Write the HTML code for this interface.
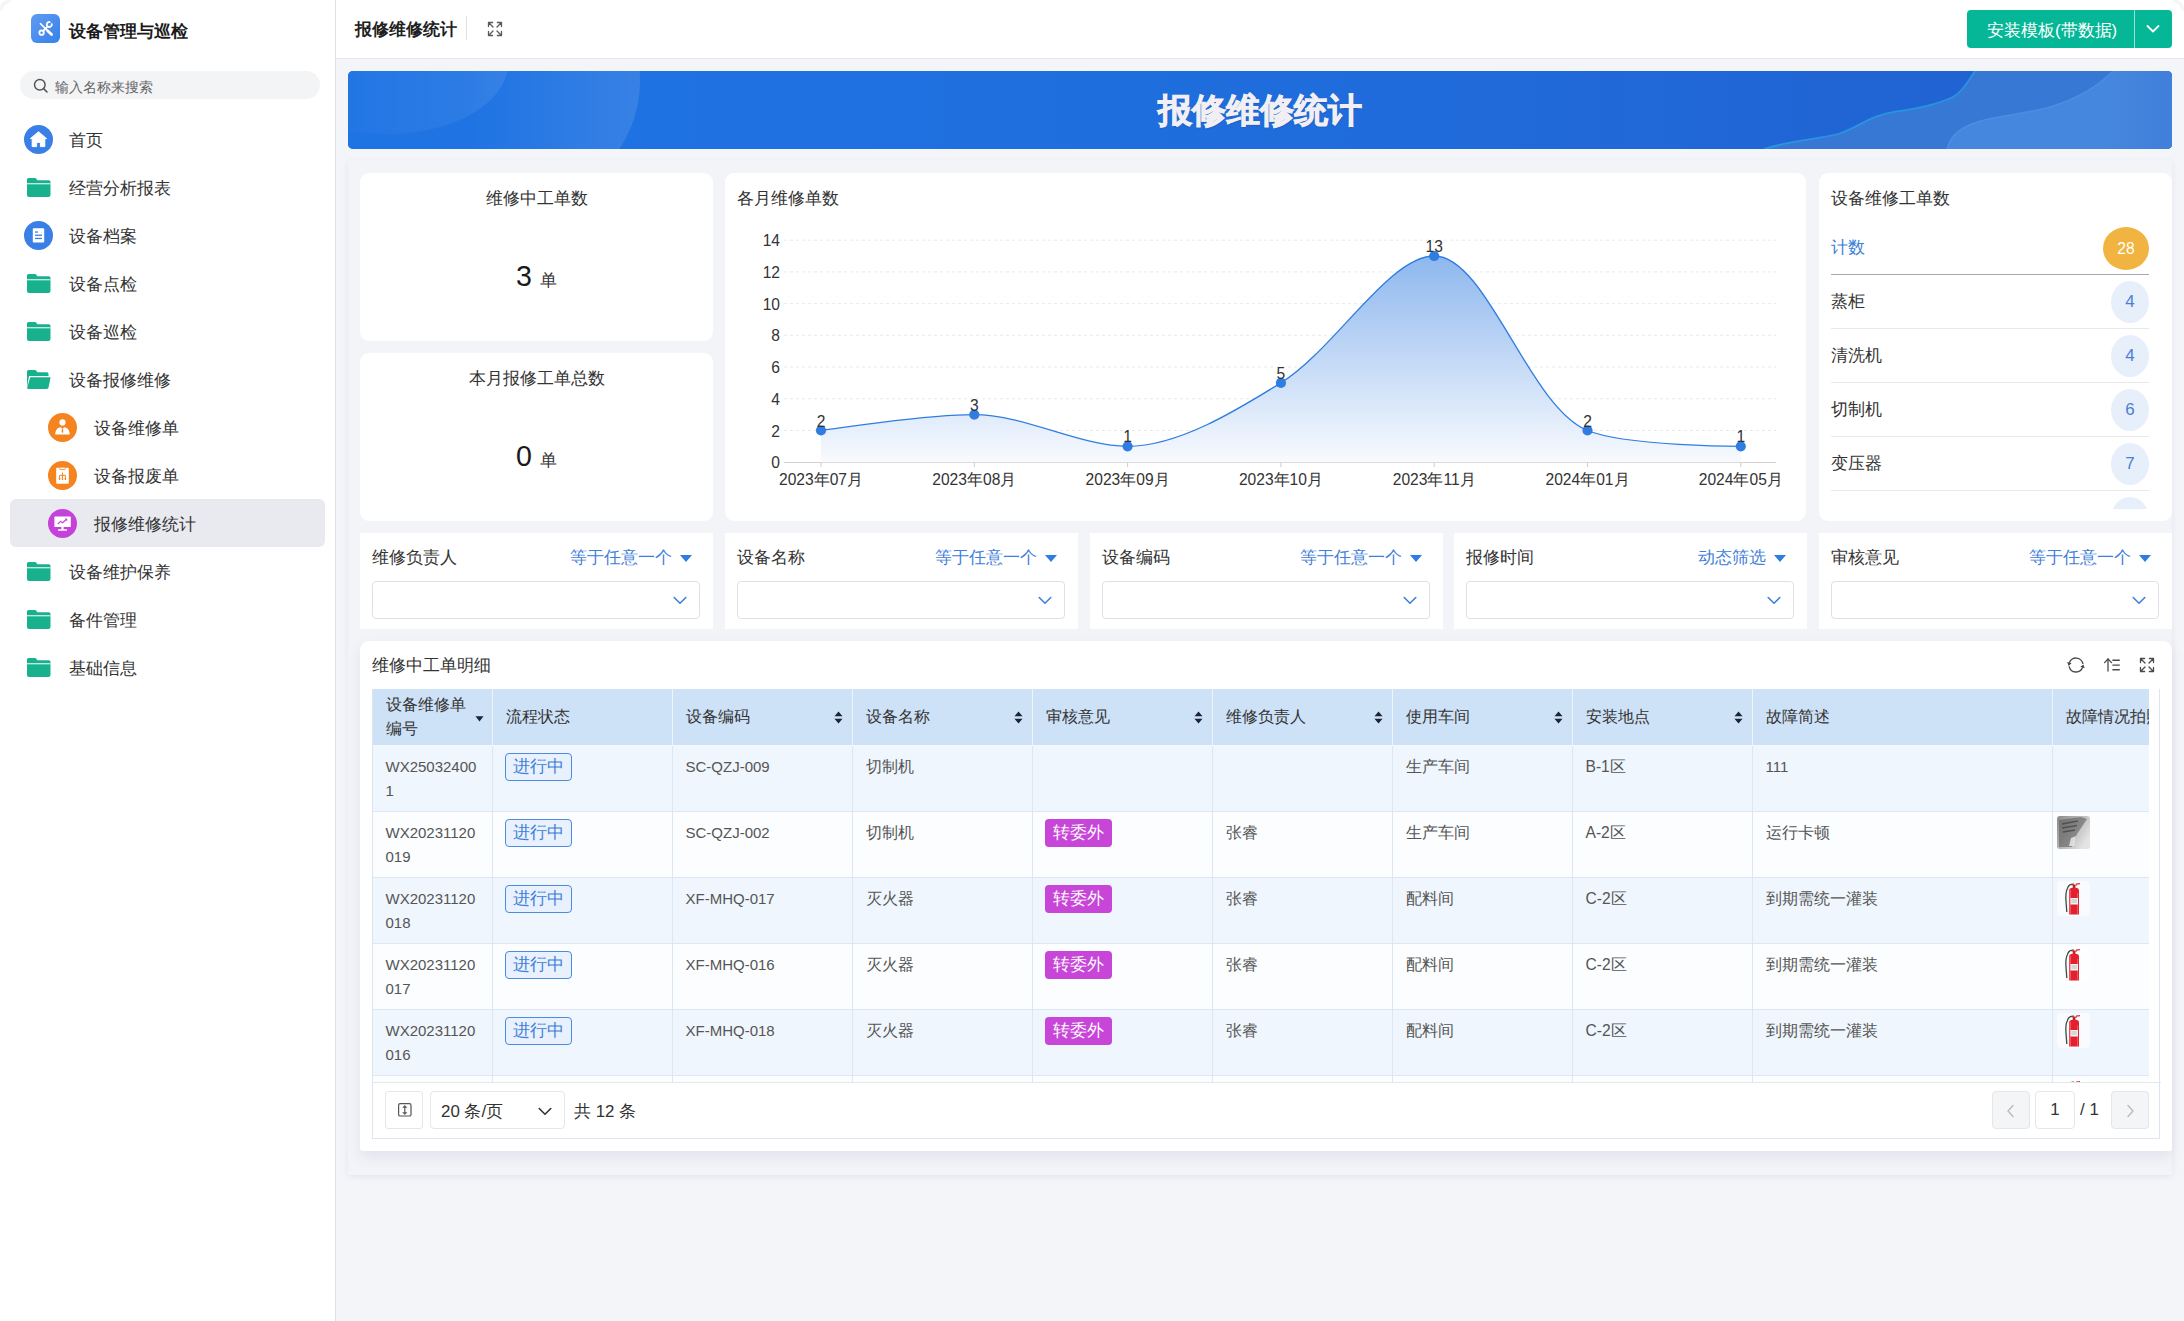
<!DOCTYPE html>
<html><head><meta charset="utf-8">
<style>
*{box-sizing:border-box;margin:0;padding:0}
html,body{width:2184px;height:1321px;overflow:hidden}
body{font-family:"Liberation Sans",sans-serif;background:#f4f5f9;color:#333;position:relative}
.abs{position:absolute}
#side{position:absolute;left:0;top:0;width:336px;height:1321px;background:#fff;border-right:1px solid #dedfe2}
.logo{position:absolute;left:31px;top:14px;width:29px;height:29px;border-radius:6px;background:linear-gradient(135deg,#609cf0,#3581ec)}
.apptitle{position:absolute;left:69px;top:17.5px;line-height:28px;font-size:16.9px;font-weight:bold;color:#1a1a1a;white-space:nowrap}
.search{position:absolute;left:20px;top:71px;width:300px;height:28px;border-radius:14px;background:#f3f4f6}
.search span{position:absolute;left:35px;top:2px;line-height:28px;font-size:14.3px;color:#666;white-space:nowrap}
.mi{position:absolute;left:0;width:335px;height:48px}
.mi .ic{position:absolute}
.mi .tx{position:absolute;left:69px;top:2px;line-height:48px;font-size:16.9px;color:#333;white-space:nowrap}
.mi.sub .tx{left:94px}
.mi.sel{left:10px;width:315px;background:#e9eaef;border-radius:6px}
.mi.sel .tx{left:84px}
#hdr{position:absolute;left:336px;top:0;width:1848px;height:59px;background:#fff;border-bottom:1px solid #e6e7ec}
.htitle{position:absolute;left:19px;top:16px;line-height:28px;font-size:16.9px;font-weight:bold;color:#1f1f1f;white-space:nowrap}
.hsep{position:absolute;left:130px;top:16px;width:1px;height:24px;background:#e0e0e0}
.gbtn{position:absolute;left:1631px;top:10px;width:205px;height:38px;border-radius:4px;background:#06b797;color:#fff}
.gbtn span{position:absolute;left:20px;top:1.5px;line-height:38px;font-size:16.9px;white-space:nowrap}
.gbtn i{position:absolute;left:167px;top:0;width:1px;height:38px;background:rgba(255,255,255,.6)}
#banner{position:absolute;left:348px;top:71px;width:1824px;height:78px;border-radius:5px;overflow:hidden;background:linear-gradient(90deg,#1f72e2 0%,#2068db 60%,#2462d2 100%)}
.btitle{position:absolute;left:0;top:0;width:100%;text-align:center;line-height:78px;font-size:34px;font-weight:900;color:#f1eff3;-webkit-text-stroke:0.8px #f1eff3;text-shadow:0 1px 2px rgba(0,0,0,.2)}
#wrap{position:absolute;left:348px;top:160px;width:1824px;height:1015px;background:#f3f4f8;box-shadow:0 2px 6px rgba(120,120,160,.12)}
.card{position:absolute;background:#fff;border-radius:9px}
.ctitle{position:absolute;line-height:24px;font-size:16.9px;color:#333;white-space:nowrap}

.kt{position:absolute;left:0;width:100%;text-align:center;line-height:24px;font-size:16.9px;color:#333;white-space:nowrap}
.knum{position:absolute;left:0;width:100%;text-align:center;white-space:nowrap;line-height:40px}
.knum b{font-weight:normal;font-size:28.6px;color:#1a1a1a}
.knum i{font-style:normal;font-size:16.9px;color:#333;margin-left:8px}
.lrow{position:absolute;left:12px;width:318px;height:54px;border-bottom:1px solid #e9e9ec}
.lrow span{position:absolute;left:0;top:15px;line-height:24px;font-size:16.9px;color:#333}
.lrow em{position:absolute;right:0;top:6px;width:38px;height:42px;border-radius:50%;background:#e7effb;color:#4a80d4;font-style:normal;font-size:16.9px;line-height:42px;text-align:center}
.ax{font-family:"Liberation Sans",sans-serif;font-size:15.6px;fill:#333}

.fcard{position:absolute;top:533px;width:353px;height:96px;background:#fff}
.fl{position:absolute;left:12px;top:13px;line-height:24px;font-size:16.9px;color:#333;white-space:nowrap}
.fm{position:absolute;right:41px;top:13px;line-height:24px;font-size:16.9px;color:#3f80d8;white-space:nowrap}
.ftri{position:absolute;right:21px;top:22px;width:0;height:0;border-left:6px solid transparent;border-right:6px solid transparent;border-top:7px solid #2f7de1}
.fsel{position:absolute;left:12px;top:48px;width:328px;height:38px;border:1px solid #dfe1e6;border-radius:4px;background:#fff}
.fsel svg{position:absolute;right:12px;top:14px}

#tcard{position:absolute;left:360px;top:641px;width:1812px;height:510px;background:#fff;border-radius:9px 9px 3px 3px;box-shadow:0 6px 14px rgba(90,90,140,.10)}
.ttl{position:absolute;left:12px;top:13px;line-height:24px;font-size:16.9px;color:#333;white-space:nowrap}
#tbox{position:absolute;left:12px;top:48px;width:1788px;height:450px;border:1px solid #dde6f0;border-top:none}
#tview{position:absolute;left:0;top:0;width:1776px;height:393px;overflow:hidden;background:#f3f7fc}
.th{position:absolute;top:0;height:56px;background:#cde1f7;border-right:1px solid #eef4fb}
.th span{position:absolute;left:12.5px;top:16px;line-height:24px;font-size:15.6px;color:#333;white-space:nowrap}
.th .srt{position:absolute;top:22px;right:9px}
.td{position:absolute;height:66px;border-right:1px solid #dce7f3;border-bottom:1px solid #dce7f3}
.td span{position:absolute;left:12.5px;top:9px;line-height:23.7px;font-size:15.6px;color:#555;white-space:nowrap}
.tg1{position:absolute;left:11.5px;top:7px;width:67px;height:28px;border:1px solid #4b8be0;border-radius:4px;background:#e8f1fd;color:#3f80d8;font-size:16.9px;line-height:26px;text-align:center}
.tg2{position:absolute;left:11.5px;top:7px;width:67px;height:28px;border-radius:4px;background:#c746d8;color:#fff;font-size:16.9px;line-height:28px;text-align:center}
#tfoot{position:absolute;left:0;top:393px;width:1788px;height:56px;border-top:1px solid #e3e8ef}
.pb{position:absolute;top:8px;height:38px;border:1px solid #e4e6ea;border-radius:4px;background:#fff}
.ptx{position:absolute;line-height:24px;font-size:16.9px;color:#333;white-space:nowrap}
.td span.lat{font-size:15px}
</style></head><body>
<div id="side">
  <div class="logo"><svg width="29" height="29" viewBox="0 0 29 29" fill="none" stroke="#fff" stroke-linecap="round"><path d="M9.4 9.6 L15.8 15.9" stroke-width="1.5"/><path d="M16.6 16.7 L20.6 20.6" stroke-width="2.8"/><path d="M12.2 17 L16.8 12.4" stroke-width="1.8"/><circle cx="10.6" cy="18.7" r="2.2" stroke-width="1.8"/><path d="M18.73 8.04 A2.5 2.5 0 1 0 20.76 10.07" stroke-width="1.8"/></svg></div>
  <div class="apptitle">设备管理与巡检</div>
  <div class="search"><svg style="position:absolute;left:13px;top:7px" width="16" height="16" viewBox="0 0 16 16"><circle cx="6.8" cy="6.8" r="5.3" fill="none" stroke="#555" stroke-width="1.5"/><path d="M10.6 10.6 L14 14" stroke="#555" stroke-width="1.6" stroke-linecap="round"/></svg><span>输入名称来搜索</span></div>
  <div class="mi" style="top:115px"><svg class="ic" style="left:24px;top:10px" width="29" height="29" viewBox="0 0 29 29"><circle cx="14.5" cy="14.5" r="14.5" fill="#3a7fe6"/><path d="M14.5 6.8 L22.6 13.6 L20.8 13.6 L20.8 21.6 L16.4 21.6 L16.4 17.4 L12.6 17.4 L12.6 21.6 L8.2 21.6 L8.2 13.6 L6.4 13.6 Z" fill="#fff" stroke="#fff" stroke-width="1" stroke-linejoin="round"/></svg><div class="tx">首页</div></div>
  <div class="mi" style="top:163px"><svg class="ic" style="left:27px;top:15px" width="24" height="19" viewBox="0 0 24 19"><path d="M1.5 0 H8.5 L10.5 2.2 H22 A1.8 1.8 0 0 1 23.5 4 V17 A2 2 0 0 1 21.5 19 H2 A2 2 0 0 1 0 17 V1.5 A1.5 1.5 0 0 1 1.5 0 Z" fill="#17b18e"/><rect x="0" y="5.2" width="23.5" height="1.1" fill="#e6f7f2"/></svg><div class="tx">经营分析报表</div></div>
  <div class="mi" style="top:211px"><svg class="ic" style="left:24px;top:10px" width="29" height="29" viewBox="0 0 29 29"><circle cx="14.5" cy="14.5" r="14.5" fill="#3a7fe6"/><rect x="8.8" y="7.2" width="11.4" height="14.4" rx="0.8" fill="#fff"/><rect x="11" y="10.4" width="3" height="1.3" fill="#3a7fe6"/><rect x="11" y="13.6" width="7" height="1.3" fill="#3a7fe6"/><rect x="11" y="16.8" width="7" height="1.3" fill="#3a7fe6"/></svg><div class="tx">设备档案</div></div>
  <div class="mi" style="top:259px"><svg class="ic" style="left:27px;top:15px" width="24" height="19" viewBox="0 0 24 19"><path d="M1.5 0 H8.5 L10.5 2.2 H22 A1.8 1.8 0 0 1 23.5 4 V17 A2 2 0 0 1 21.5 19 H2 A2 2 0 0 1 0 17 V1.5 A1.5 1.5 0 0 1 1.5 0 Z" fill="#17b18e"/><rect x="0" y="5.2" width="23.5" height="1.1" fill="#e6f7f2"/></svg><div class="tx">设备点检</div></div>
  <div class="mi" style="top:307px"><svg class="ic" style="left:27px;top:15px" width="24" height="19" viewBox="0 0 24 19"><path d="M1.5 0 H8.5 L10.5 2.2 H22 A1.8 1.8 0 0 1 23.5 4 V17 A2 2 0 0 1 21.5 19 H2 A2 2 0 0 1 0 17 V1.5 A1.5 1.5 0 0 1 1.5 0 Z" fill="#17b18e"/><rect x="0" y="5.2" width="23.5" height="1.1" fill="#e6f7f2"/></svg><div class="tx">设备巡检</div></div>
  <div class="mi" style="top:355px"><svg class="ic" style="left:27px;top:15px" width="24" height="19" viewBox="0 0 24 19"><path d="M1.5 0 H8.5 L10.5 2.2 H20 A1.8 1.8 0 0 1 21.5 4 V6 H2 L0 17 V1.5 A1.5 1.5 0 0 1 1.5 0 Z" fill="#17b18e"/><path d="M3.2 7.2 H23.6 L21.6 17.2 A2 2 0 0 1 19.6 19 H1.4 A1.2 1.2 0 0 1 0.2 17.6 Z" fill="#17b18e"/></svg><div class="tx">设备报修维修</div></div>
  <div class="mi sub" style="top:403px"><svg class="ic" style="left:48px;top:10px" width="29" height="29" viewBox="0 0 29 29"><circle cx="14.5" cy="14.5" r="14.5" fill="#f5841f"/><circle cx="14.5" cy="9.4" r="3.1" fill="#fff"/><path d="M7.2 21.6 C7.4 17 9.6 14.6 12.4 14.2 L14.5 15.4 L16.6 14.2 C19.4 14.6 21.6 17 21.8 21.6 Z" fill="#fff"/><path d="M14 15.4 H15 L15.3 19 L14.5 20 L13.7 19 Z" fill="#f5841f"/></svg><div class="tx">设备维修单</div></div>
  <div class="mi sub" style="top:451px"><svg class="ic" style="left:48px;top:10px" width="29" height="29" viewBox="0 0 29 29"><circle cx="14.5" cy="14.5" r="14.5" fill="#f5841f"/><rect x="8.2" y="6.8" width="12.6" height="16" rx="0.8" fill="#fff"/><rect x="11.8" y="6.2" width="5.4" height="2.4" rx="0.6" fill="#fff" stroke="#f5841f" stroke-width="0.8"/><path d="M14.5 11.5 V14.3 M11.6 17.6 V14.3 H17.4 V17.6 M14.5 14.3 V17.6" stroke="#f5841f" stroke-width="1" fill="none"/><circle cx="11.6" cy="18" r="0.9" fill="#f5841f"/><circle cx="14.5" cy="18" r="0.9" fill="#f5841f"/><circle cx="17.4" cy="18" r="0.9" fill="#f5841f"/></svg><div class="tx">设备报废单</div></div>
  <div class="mi sub sel" style="top:499px"><svg class="ic" style="left:38px;top:10px" width="29" height="29" viewBox="0 0 29 29"><circle cx="14.5" cy="14.5" r="14.5" fill="#c442d9"/><rect x="6.4" y="7.5" width="16.4" height="10.5" rx="0.6" fill="#fff"/><path d="M9.8 15 L12.6 12.4 L14.6 13.8 L18.6 10.2" stroke="#c442d9" stroke-width="1.2" fill="none"/><path d="M17 10 H18.8 V11.8" stroke="#c442d9" stroke-width="1" fill="none"/><rect x="13.4" y="18" width="2.2" height="2.6" fill="#fff"/><rect x="10" y="20.2" width="9" height="1.6" rx=".4" fill="#fff"/></svg><div class="tx">报修维修统计</div></div>
  <div class="mi" style="top:547px"><svg class="ic" style="left:27px;top:15px" width="24" height="19" viewBox="0 0 24 19"><path d="M1.5 0 H8.5 L10.5 2.2 H22 A1.8 1.8 0 0 1 23.5 4 V17 A2 2 0 0 1 21.5 19 H2 A2 2 0 0 1 0 17 V1.5 A1.5 1.5 0 0 1 1.5 0 Z" fill="#17b18e"/><rect x="0" y="5.2" width="23.5" height="1.1" fill="#e6f7f2"/></svg><div class="tx">设备维护保养</div></div>
  <div class="mi" style="top:595px"><svg class="ic" style="left:27px;top:15px" width="24" height="19" viewBox="0 0 24 19"><path d="M1.5 0 H8.5 L10.5 2.2 H22 A1.8 1.8 0 0 1 23.5 4 V17 A2 2 0 0 1 21.5 19 H2 A2 2 0 0 1 0 17 V1.5 A1.5 1.5 0 0 1 1.5 0 Z" fill="#17b18e"/><rect x="0" y="5.2" width="23.5" height="1.1" fill="#e6f7f2"/></svg><div class="tx">备件管理</div></div>
  <div class="mi" style="top:643px"><svg class="ic" style="left:27px;top:15px" width="24" height="19" viewBox="0 0 24 19"><path d="M1.5 0 H8.5 L10.5 2.2 H22 A1.8 1.8 0 0 1 23.5 4 V17 A2 2 0 0 1 21.5 19 H2 A2 2 0 0 1 0 17 V1.5 A1.5 1.5 0 0 1 1.5 0 Z" fill="#17b18e"/><rect x="0" y="5.2" width="23.5" height="1.1" fill="#e6f7f2"/></svg><div class="tx">基础信息</div></div>
</div>
<div id="hdr">
  <div class="htitle">报修维修统计</div>
  <div class="hsep"></div><svg class="abs" style="left:151px;top:21px" width="16" height="16" viewBox="0 0 16 16" fill="none" stroke="#5a5a5a" stroke-width="1.3" stroke-linecap="round" stroke-linejoin="round"><path d="M1.5 5.6 V1.5 H5.6 M1.5 1.5 L6 6"/><path d="M10.4 1.5 H14.5 V5.6 M14.5 1.5 L10 6"/><path d="M1.5 10.4 V14.5 H5.6 M1.5 14.5 L6 10"/><path d="M14.5 10.4 V14.5 H10.4 M14.5 14.5 L10 10"/></svg>
  <div class="gbtn"><span>安装模板(带数据)</span><i></i><svg class="abs" style="left:179px;top:14px" width="14" height="10" viewBox="0 0 14 10"><path d="M1.5 2 L7 7.5 L12.5 2" fill="none" stroke="#fff" stroke-width="1.8" stroke-linecap="round" stroke-linejoin="round"/></svg></div>
</div>
<div id="banner"><svg class="abs" style="left:0;top:0" width="1824" height="78" viewBox="0 0 1824 78">
<defs>
<linearGradient id="bg1" x1="0" y1="0" x2="1" y2="0"><stop offset="0" stop-color="#1f74e4"/><stop offset="0.5" stop-color="#1f6ddd"/><stop offset="1" stop-color="#2260d0"/></linearGradient>
<linearGradient id="c2" x1="0" y1="0" x2="1" y2="0"><stop offset="0.3" stop-color="#fff" stop-opacity="0"/><stop offset="1" stop-color="#fff" stop-opacity="0.11"/></linearGradient>
<linearGradient id="c1" x1="0" y1="0" x2="1" y2="0"><stop offset="0.2" stop-color="#fff" stop-opacity="0.0"/><stop offset="1" stop-color="#fff" stop-opacity="0.08"/></linearGradient>
<linearGradient id="rfade" x1="0" y1="0" x2="1" y2="0"><stop offset="0" stop-color="#2a60c8" stop-opacity="0"/><stop offset="1" stop-color="#2a60c8" stop-opacity="0.18"/></linearGradient>
</defs>
<rect width="1824" height="78" fill="url(#bg1)"/>
<ellipse cx="40" cy="-8" rx="120" ry="71" fill="url(#c1)"/>
<circle cx="170" cy="10" r="122" fill="url(#c2)"/>
<path d="M1416,78 C1440,70 1470,68 1490,63 C1510,57 1520,45 1547,40.6 C1575,37 1590,33 1605,26 C1615,20 1620,10 1627,0 L1824,0 L1824,78 Z" fill="#3778d4"/>
<path d="M1416,78 C1440,70 1470,68 1490,63 C1510,57 1520,45 1547,40.6 C1575,37 1590,33 1605,26 C1615,20 1620,10 1627,0" fill="none" stroke="#28a0e4" stroke-width="1.8" opacity="0.75"/>
<path d="M1599,78 C1602,66 1610,55 1640,48 C1665,43 1690,40 1705,35 C1730,27 1750,15 1765,0 L1824,0 L1824,78 Z" fill="#4586de"/>
<path d="M1599,78 C1602,66 1610,55 1640,48 C1665,43 1690,40 1705,35 C1730,27 1750,15 1765,0" fill="none" stroke="#5a9af0" stroke-width="1.5" opacity="0.5"/>
<rect x="1760" y="0" width="64" height="78" fill="url(#rfade)"/>
</svg><div class="btitle">报修维修统计</div></div>
<div id="wrap"></div>
<div class="card" style="left:360px;top:173px;width:353px;height:168px"><div class="kt" style="top:14px">维修中工单数</div><div class="knum" style="top:83px"><b>3</b><i>单</i></div></div>
<div class="card" style="left:360px;top:353px;width:353px;height:168px"><div class="kt" style="top:14px">本月报修工单总数</div><div class="knum" style="top:83px"><b>0</b><i>单</i></div></div>
<div class="card" style="left:725px;top:173px;width:1081px;height:348px"><div class="ctitle" style="left:12px;top:14px">各月维修单数</div></div>
<div class="card" style="left:1819px;top:173px;width:353px;height:348px"><div class="ctitle" style="left:12px;top:14px">设备维修工单数</div>
<div style="position:absolute;left:0;top:47px;width:353px;height:289px;overflow:hidden">
<div class="lrow" style="top:1px;border-bottom:1px solid #a9a9ad"><span style="color:#3d7fd9">计数</span><em style="width:46px;height:43px;top:5.5px;line-height:44px;background:#f2b440;color:#fff;font-size:15.6px">28</em></div>
<div class="lrow" style="top:55px"><span>蒸柜</span><em>4</em></div>
<div class="lrow" style="top:109px"><span>清洗机</span><em>4</em></div>
<div class="lrow" style="top:163px"><span>切制机</span><em>6</em></div>
<div class="lrow" style="top:217px"><span>变压器</span><em>7</em></div>
<div class="lrow" style="top:271px"><span>电机</span><em>3</em></div>
</div></div>
<div class="fcard" style="left:360.0px"><div class="fl">维修负责人</div><div class="fm">等于任意一个</div><div class="ftri"></div><div class="fsel"><svg width="14" height="9" viewBox="0 0 14 9"><path d="M1.2 1.5 L7 7.2 L12.8 1.5" fill="none" stroke="#3f80d8" stroke-width="1.6" stroke-linecap="round" stroke-linejoin="round"/></svg></div></div>
<div class="fcard" style="left:724.8px"><div class="fl">设备名称</div><div class="fm">等于任意一个</div><div class="ftri"></div><div class="fsel"><svg width="14" height="9" viewBox="0 0 14 9"><path d="M1.2 1.5 L7 7.2 L12.8 1.5" fill="none" stroke="#3f80d8" stroke-width="1.6" stroke-linecap="round" stroke-linejoin="round"/></svg></div></div>
<div class="fcard" style="left:1089.6px"><div class="fl">设备编码</div><div class="fm">等于任意一个</div><div class="ftri"></div><div class="fsel"><svg width="14" height="9" viewBox="0 0 14 9"><path d="M1.2 1.5 L7 7.2 L12.8 1.5" fill="none" stroke="#3f80d8" stroke-width="1.6" stroke-linecap="round" stroke-linejoin="round"/></svg></div></div>
<div class="fcard" style="left:1454.4px"><div class="fl">报修时间</div><div class="fm">动态筛选</div><div class="ftri"></div><div class="fsel"><svg width="14" height="9" viewBox="0 0 14 9"><path d="M1.2 1.5 L7 7.2 L12.8 1.5" fill="none" stroke="#3f80d8" stroke-width="1.6" stroke-linecap="round" stroke-linejoin="round"/></svg></div></div>
<div class="fcard" style="left:1819.2px"><div class="fl">审核意见</div><div class="fm">等于任意一个</div><div class="ftri"></div><div class="fsel"><svg width="14" height="9" viewBox="0 0 14 9"><path d="M1.2 1.5 L7 7.2 L12.8 1.5" fill="none" stroke="#3f80d8" stroke-width="1.6" stroke-linecap="round" stroke-linejoin="round"/></svg></div></div>
<div id="tcard"><div class="ttl">维修中工单明细</div><svg class="abs" style="left:1706px;top:14px" width="20" height="20" viewBox="0 0 20 20"><path d="M16.93 9.03 A7 7 0 0 0 3.24 8.19" fill="none" stroke="#4a4a4a" stroke-width="1.3"/><path d="M3.13 11.34 A7 7 0 0 0 16.69 12.05" fill="none" stroke="#4a4a4a" stroke-width="1.3"/><path d="M2.6 10.9 L5.59 8.31 L1.15 7.11 Z" fill="#4a4a4a"/><path d="M17.42 9.4 L18.74 13.2 L14.34 11.86 Z" fill="#4a4a4a"/></svg><svg class="abs" style="left:1740px;top:14px" width="24" height="20" viewBox="0 0 24 20" fill="none" stroke="#4a4a4a" stroke-width="1.3" stroke-linecap="round" stroke-linejoin="round"><path d="M8 16 V4"/><path d="M4.6 7.6 L8 4 L11.6 7.6"/><path d="M12.4 5.2 H19.8 M12.4 10.1 H19.8 M12.4 14.8 H19.8" stroke-linecap="butt" stroke-width="1.4"/></svg><svg class="abs" style="left:1779px;top:16px" width="16" height="16" viewBox="0 0 16 16" fill="none" stroke="#4a4a4a" stroke-width="1.3" stroke-linecap="round" stroke-linejoin="round"><path d="M1.5 5.6 V1.5 H5.6 M1.5 1.5 L6 6"/><path d="M10.4 1.5 H14.5 V5.6 M14.5 1.5 L10 6"/><path d="M1.5 10.4 V14.5 H5.6 M1.5 14.5 L6 10"/><path d="M14.5 10.4 V14.5 H10.4 M14.5 14.5 L10 10"/></svg><div id="tbox"><div id="tview"><div class="th" style="left:0px;width:120px"><span style="top:4px">设备维修单<br>编号</span><svg class="srt" style="top:27px;right:8px" width="9" height="6" viewBox="0 0 9 6"><path d="M0.5 0.3 H8.5 L4.5 5.6 Z" fill="#1c2533"/></svg></div><div class="th" style="left:120px;width:180px"><span style="">流程状态</span></div><div class="th" style="left:300px;width:180px"><span style="">设备编码</span><svg class="srt" width="9" height="13" viewBox="0 0 9 13"><path d="M4.5 0.5 L8.5 5.2 H0.5 Z M4.5 12.5 L8.5 7.8 H0.5 Z" fill="#1c2533"/></svg></div><div class="th" style="left:480px;width:180px"><span style="">设备名称</span><svg class="srt" width="9" height="13" viewBox="0 0 9 13"><path d="M4.5 0.5 L8.5 5.2 H0.5 Z M4.5 12.5 L8.5 7.8 H0.5 Z" fill="#1c2533"/></svg></div><div class="th" style="left:660px;width:180px"><span style="">审核意见</span><svg class="srt" width="9" height="13" viewBox="0 0 9 13"><path d="M4.5 0.5 L8.5 5.2 H0.5 Z M4.5 12.5 L8.5 7.8 H0.5 Z" fill="#1c2533"/></svg></div><div class="th" style="left:840px;width:180px"><span style="">维修负责人</span><svg class="srt" width="9" height="13" viewBox="0 0 9 13"><path d="M4.5 0.5 L8.5 5.2 H0.5 Z M4.5 12.5 L8.5 7.8 H0.5 Z" fill="#1c2533"/></svg></div><div class="th" style="left:1020px;width:180px"><span style="">使用车间</span><svg class="srt" width="9" height="13" viewBox="0 0 9 13"><path d="M4.5 0.5 L8.5 5.2 H0.5 Z M4.5 12.5 L8.5 7.8 H0.5 Z" fill="#1c2533"/></svg></div><div class="th" style="left:1200px;width:180px"><span style="">安装地点</span><svg class="srt" width="9" height="13" viewBox="0 0 9 13"><path d="M4.5 0.5 L8.5 5.2 H0.5 Z M4.5 12.5 L8.5 7.8 H0.5 Z" fill="#1c2533"/></svg></div><div class="th" style="left:1380px;width:300px"><span style="">故障简述</span></div><div class="th" style="left:1680px;width:200px"><span style="">故障情况拍照</span></div><div class="td" style="left:0px;top:57px;width:120px;background:#eff6fd"><span class="lat">WX25032400<br>1</span></div><div class="td" style="left:120px;top:57px;width:180px;background:#eff6fd"><div class="tg1">进行中</div></div><div class="td" style="left:300px;top:57px;width:180px;background:#eff6fd"><span class="lat">SC-QZJ-009</span></div><div class="td" style="left:480px;top:57px;width:180px;background:#eff6fd"><span>切制机</span></div><div class="td" style="left:660px;top:57px;width:180px;background:#eff6fd"></div><div class="td" style="left:840px;top:57px;width:180px;background:#eff6fd"></div><div class="td" style="left:1020px;top:57px;width:180px;background:#eff6fd"><span>生产车间</span></div><div class="td" style="left:1200px;top:57px;width:180px;background:#eff6fd"><span>B-1区</span></div><div class="td" style="left:1380px;top:57px;width:300px;background:#eff6fd"><span class="lat">111</span></div><div class="td" style="left:1680px;top:57px;width:200px;background:#eff6fd"></div><div class="td" style="left:0px;top:123px;width:120px;background:#fbfdff"><span class="lat">WX20231120<br>019</span></div><div class="td" style="left:120px;top:123px;width:180px;background:#fbfdff"><div class="tg1">进行中</div></div><div class="td" style="left:300px;top:123px;width:180px;background:#fbfdff"><span class="lat">SC-QZJ-002</span></div><div class="td" style="left:480px;top:123px;width:180px;background:#fbfdff"><span>切制机</span></div><div class="td" style="left:660px;top:123px;width:180px;background:#fbfdff"><div class="tg2">转委外</div></div><div class="td" style="left:840px;top:123px;width:180px;background:#fbfdff"><span>张睿</span></div><div class="td" style="left:1020px;top:123px;width:180px;background:#fbfdff"><span>生产车间</span></div><div class="td" style="left:1200px;top:123px;width:180px;background:#fbfdff"><span>A-2区</span></div><div class="td" style="left:1380px;top:123px;width:300px;background:#fbfdff"><span>运行卡顿</span></div><div class="td" style="left:1680px;top:123px;width:200px;background:#fbfdff"><svg style="position:absolute;left:4px;top:4px" width="33" height="33" viewBox="0 0 33 33"><defs><linearGradient id="gg" x1="0" y1="0" x2="1" y2="0.6"><stop offset="0" stop-color="#8a8a8a"/><stop offset="0.5" stop-color="#b5b5b5"/><stop offset="1" stop-color="#e4e4e4"/></linearGradient></defs><rect width="33" height="33" rx="3" fill="url(#gg)"/><path d="M2 4 L24 1 L30 3 L20 18 L15 31 L2 31 Z" fill="#555" opacity=".55"/><path d="M5 8 L21 5 M5 12 L20 9.5 M6 16 L18 14" stroke="#333" stroke-width="1.4" opacity=".6"/><path d="M14 22 L19 20 L17 30 L12 30 Z" fill="#eee" opacity=".8"/></svg></div><div class="td" style="left:0px;top:189px;width:120px;background:#eff6fd"><span class="lat">WX20231120<br>018</span></div><div class="td" style="left:120px;top:189px;width:180px;background:#eff6fd"><div class="tg1">进行中</div></div><div class="td" style="left:300px;top:189px;width:180px;background:#eff6fd"><span class="lat">XF-MHQ-017</span></div><div class="td" style="left:480px;top:189px;width:180px;background:#eff6fd"><span>灭火器</span></div><div class="td" style="left:660px;top:189px;width:180px;background:#eff6fd"><div class="tg2">转委外</div></div><div class="td" style="left:840px;top:189px;width:180px;background:#eff6fd"><span>张睿</span></div><div class="td" style="left:1020px;top:189px;width:180px;background:#eff6fd"><span>配料间</span></div><div class="td" style="left:1200px;top:189px;width:180px;background:#eff6fd"><span>C-2区</span></div><div class="td" style="left:1380px;top:189px;width:300px;background:#eff6fd"><span>到期需统一灌装</span></div><div class="td" style="left:1680px;top:189px;width:200px;background:#eff6fd"><svg style="position:absolute;left:4px;top:3px" width="33" height="35" viewBox="0 0 33 35"><rect x="0" y="0" width="33" height="35" rx="4" fill="#fff" opacity="0.6"/><path d="M17 3.2 C14 3 12 4 11 6 L10.5 7.5 C9.5 9 8.5 13 9 20 L9.8 31" fill="none" stroke="#3d4a3d" stroke-width="1.3"/><path d="M14.5 4 H20 M19 3.2 L23 2.6" stroke="#d33" stroke-width="1.2"/><rect x="15.8" y="4" width="2.6" height="3" fill="#b22"/><path d="M12.2 9.5 C12.2 7.4 14.4 6.6 17.1 6.6 C19.8 6.6 22 7.4 22 9.5 V33.5 H12.2 Z" fill="#e3202d"/><path d="M13.4 9 V33 M20.6 12 V33" stroke="#ff8a8a" stroke-width="0.8" opacity=".7"/><rect x="13.4" y="17" width="7.6" height="6.5" fill="#f2f2f2"/><path d="M14.4 19 H20 M14.4 21 H20" stroke="#999" stroke-width="0.6"/></svg></div><div class="td" style="left:0px;top:255px;width:120px;background:#fbfdff"><span class="lat">WX20231120<br>017</span></div><div class="td" style="left:120px;top:255px;width:180px;background:#fbfdff"><div class="tg1">进行中</div></div><div class="td" style="left:300px;top:255px;width:180px;background:#fbfdff"><span class="lat">XF-MHQ-016</span></div><div class="td" style="left:480px;top:255px;width:180px;background:#fbfdff"><span>灭火器</span></div><div class="td" style="left:660px;top:255px;width:180px;background:#fbfdff"><div class="tg2">转委外</div></div><div class="td" style="left:840px;top:255px;width:180px;background:#fbfdff"><span>张睿</span></div><div class="td" style="left:1020px;top:255px;width:180px;background:#fbfdff"><span>配料间</span></div><div class="td" style="left:1200px;top:255px;width:180px;background:#fbfdff"><span>C-2区</span></div><div class="td" style="left:1380px;top:255px;width:300px;background:#fbfdff"><span>到期需统一灌装</span></div><div class="td" style="left:1680px;top:255px;width:200px;background:#fbfdff"><svg style="position:absolute;left:4px;top:3px" width="33" height="35" viewBox="0 0 33 35"><rect x="0" y="0" width="33" height="35" rx="4" fill="#fff" opacity="0.6"/><path d="M17 3.2 C14 3 12 4 11 6 L10.5 7.5 C9.5 9 8.5 13 9 20 L9.8 31" fill="none" stroke="#3d4a3d" stroke-width="1.3"/><path d="M14.5 4 H20 M19 3.2 L23 2.6" stroke="#d33" stroke-width="1.2"/><rect x="15.8" y="4" width="2.6" height="3" fill="#b22"/><path d="M12.2 9.5 C12.2 7.4 14.4 6.6 17.1 6.6 C19.8 6.6 22 7.4 22 9.5 V33.5 H12.2 Z" fill="#e3202d"/><path d="M13.4 9 V33 M20.6 12 V33" stroke="#ff8a8a" stroke-width="0.8" opacity=".7"/><rect x="13.4" y="17" width="7.6" height="6.5" fill="#f2f2f2"/><path d="M14.4 19 H20 M14.4 21 H20" stroke="#999" stroke-width="0.6"/></svg></div><div class="td" style="left:0px;top:321px;width:120px;background:#eff6fd"><span class="lat">WX20231120<br>016</span></div><div class="td" style="left:120px;top:321px;width:180px;background:#eff6fd"><div class="tg1">进行中</div></div><div class="td" style="left:300px;top:321px;width:180px;background:#eff6fd"><span class="lat">XF-MHQ-018</span></div><div class="td" style="left:480px;top:321px;width:180px;background:#eff6fd"><span>灭火器</span></div><div class="td" style="left:660px;top:321px;width:180px;background:#eff6fd"><div class="tg2">转委外</div></div><div class="td" style="left:840px;top:321px;width:180px;background:#eff6fd"><span>张睿</span></div><div class="td" style="left:1020px;top:321px;width:180px;background:#eff6fd"><span>配料间</span></div><div class="td" style="left:1200px;top:321px;width:180px;background:#eff6fd"><span>C-2区</span></div><div class="td" style="left:1380px;top:321px;width:300px;background:#eff6fd"><span>到期需统一灌装</span></div><div class="td" style="left:1680px;top:321px;width:200px;background:#eff6fd"><svg style="position:absolute;left:4px;top:3px" width="33" height="35" viewBox="0 0 33 35"><rect x="0" y="0" width="33" height="35" rx="4" fill="#fff" opacity="0.6"/><path d="M17 3.2 C14 3 12 4 11 6 L10.5 7.5 C9.5 9 8.5 13 9 20 L9.8 31" fill="none" stroke="#3d4a3d" stroke-width="1.3"/><path d="M14.5 4 H20 M19 3.2 L23 2.6" stroke="#d33" stroke-width="1.2"/><rect x="15.8" y="4" width="2.6" height="3" fill="#b22"/><path d="M12.2 9.5 C12.2 7.4 14.4 6.6 17.1 6.6 C19.8 6.6 22 7.4 22 9.5 V33.5 H12.2 Z" fill="#e3202d"/><path d="M13.4 9 V33 M20.6 12 V33" stroke="#ff8a8a" stroke-width="0.8" opacity=".7"/><rect x="13.4" y="17" width="7.6" height="6.5" fill="#f2f2f2"/><path d="M14.4 19 H20 M14.4 21 H20" stroke="#999" stroke-width="0.6"/></svg></div><div class="td" style="left:0px;top:387px;width:120px;background:#fbfdff"><span class="lat">WX20231120<br>015</span></div><div class="td" style="left:120px;top:387px;width:180px;background:#fbfdff"><div class="tg1">进行中</div></div><div class="td" style="left:300px;top:387px;width:180px;background:#fbfdff"><span class="lat">XF-MHQ-015</span></div><div class="td" style="left:480px;top:387px;width:180px;background:#fbfdff"><span>灭火器</span></div><div class="td" style="left:660px;top:387px;width:180px;background:#fbfdff"><div class="tg2">转委外</div></div><div class="td" style="left:840px;top:387px;width:180px;background:#fbfdff"><span>张睿</span></div><div class="td" style="left:1020px;top:387px;width:180px;background:#fbfdff"><span>配料间</span></div><div class="td" style="left:1200px;top:387px;width:180px;background:#fbfdff"><span>C-2区</span></div><div class="td" style="left:1380px;top:387px;width:300px;background:#fbfdff"><span>到期需统一灌装</span></div><div class="td" style="left:1680px;top:387px;width:200px;background:#fbfdff"><svg style="position:absolute;left:4px;top:3px" width="33" height="35" viewBox="0 0 33 35"><rect x="0" y="0" width="33" height="35" rx="4" fill="#fff" opacity="0.6"/><path d="M17 3.2 C14 3 12 4 11 6 L10.5 7.5 C9.5 9 8.5 13 9 20 L9.8 31" fill="none" stroke="#3d4a3d" stroke-width="1.3"/><path d="M14.5 4 H20 M19 3.2 L23 2.6" stroke="#d33" stroke-width="1.2"/><rect x="15.8" y="4" width="2.6" height="3" fill="#b22"/><path d="M12.2 9.5 C12.2 7.4 14.4 6.6 17.1 6.6 C19.8 6.6 22 7.4 22 9.5 V33.5 H12.2 Z" fill="#e3202d"/><path d="M13.4 9 V33 M20.6 12 V33" stroke="#ff8a8a" stroke-width="0.8" opacity=".7"/><rect x="13.4" y="17" width="7.6" height="6.5" fill="#f2f2f2"/><path d="M14.4 19 H20 M14.4 21 H20" stroke="#999" stroke-width="0.6"/></svg></div></div><div id="tfoot"><div class="pb" style="left:12px;width:38px;border-radius:3px"><svg style="position:absolute;left:11.5px;top:11px" width="14" height="14" viewBox="0 0 14 14" fill="none" stroke="#555" stroke-width="1.2"><rect x="0.6" y="0.6" width="12.4" height="12.4" rx="1.6"/><path d="M6.8 4 V10"/><path d="M4.8 4.4 L6.8 2.4 L8.8 4.4 Z M4.8 9.6 L6.8 11.6 L8.8 9.6 Z" fill="#555" stroke-width="0.6"/></svg></div><div class="pb" style="left:57px;width:135px"><div class="ptx" style="left:10px;top:7.5px">20 条/页</div><svg style="position:absolute;left:107px;top:15px" width="14" height="9" viewBox="0 0 14 9"><path d="M1.2 1.5 L7 7.2 L12.8 1.5" fill="none" stroke="#333" stroke-width="1.6" stroke-linecap="round" stroke-linejoin="round"/></svg></div><div class="ptx" style="left:201px;top:16.5px">共 12 条</div><div class="pb" style="left:1619px;width:38px;background:#f4f5f7"><svg style="position:absolute;left:13px;top:12px" width="9" height="14" viewBox="0 0 9 14"><path d="M7 1.5 L2 7 L7 12.5" fill="none" stroke="#bbb" stroke-width="1.4" stroke-linecap="round"/></svg></div><div class="pb" style="left:1662px;width:40px"><div class="ptx" style="left:0;width:38px;text-align:center;top:6px">1</div></div><div class="ptx" style="left:1707px;top:15px">/ 1</div><div class="pb" style="left:1737.5px;width:38px;background:#f4f5f7"><svg style="position:absolute;left:14px;top:12px" width="9" height="14" viewBox="0 0 9 14"><path d="M2 1.5 L7 7 L2 12.5" fill="none" stroke="#bbb" stroke-width="1.4" stroke-linecap="round"/></svg></div></div></div></div>
<svg class="abs" style="left:0;top:0;pointer-events:none" width="2184" height="1321" viewBox="0 0 2184 1321">
<defs><linearGradient id="ag" x1="0" y1="255" x2="0" y2="462" gradientUnits="userSpaceOnUse"><stop offset="0" stop-color="#8db7ee"/><stop offset="1" stop-color="#f8fafe"/></linearGradient></defs>
<line x1="784" x2="1776" y1="430.5" y2="430.5" stroke="#e9e9e9" stroke-dasharray="3 3"/><line x1="784" x2="1776" y1="398.8" y2="398.8" stroke="#e9e9e9" stroke-dasharray="3 3"/><line x1="784" x2="1776" y1="367.0" y2="367.0" stroke="#e9e9e9" stroke-dasharray="3 3"/><line x1="784" x2="1776" y1="335.3" y2="335.3" stroke="#e9e9e9" stroke-dasharray="3 3"/><line x1="784" x2="1776" y1="303.6" y2="303.6" stroke="#e9e9e9" stroke-dasharray="3 3"/><line x1="784" x2="1776" y1="271.9" y2="271.9" stroke="#e9e9e9" stroke-dasharray="3 3"/><line x1="784" x2="1776" y1="240.2" y2="240.2" stroke="#e9e9e9" stroke-dasharray="3 3"/>
<line x1="784" x2="1776" y1="462.5" y2="462.5" stroke="#d2d2d2"/>
<line x1="821" x2="821" y1="462" y2="467" stroke="#ccc"/><line x1="974.3" x2="974.3" y1="462" y2="467" stroke="#ccc"/><line x1="1127.6" x2="1127.6" y1="462" y2="467" stroke="#ccc"/><line x1="1280.9" x2="1280.9" y1="462" y2="467" stroke="#ccc"/><line x1="1434.2" x2="1434.2" y1="462" y2="467" stroke="#ccc"/><line x1="1587.5" x2="1587.5" y1="462" y2="467" stroke="#ccc"/><line x1="1740.8" x2="1740.8" y1="462" y2="467" stroke="#ccc"/>
<path d="M821.00,430.48 C821.00,430.48 925.63,414.62 974.30,414.62 C1023.74,414.62 1079.97,446.34 1127.60,446.34 C1178.08,446.34 1236.29,410.59 1280.90,382.90 C1334.40,349.69 1388.93,256.02 1434.20,256.02 C1487.04,256.02 1528.52,406.58 1587.50,430.48 C1626.64,446.34 1740.80,446.34 1740.80,446.34 L1740.80,462.2 L821.00,462.2 Z" fill="url(#ag)"/>
<path d="M821.00,430.48 C821.00,430.48 925.63,414.62 974.30,414.62 C1023.74,414.62 1079.97,446.34 1127.60,446.34 C1178.08,446.34 1236.29,410.59 1280.90,382.90 C1334.40,349.69 1388.93,256.02 1434.20,256.02 C1487.04,256.02 1528.52,406.58 1587.50,430.48 C1626.64,446.34 1740.80,446.34 1740.80,446.34" fill="none" stroke="#2f7de1" stroke-width="1.3"/>
<circle cx="821" cy="430.48" r="5.1" fill="#2f7de1"/><circle cx="974.3" cy="414.62" r="5.1" fill="#2f7de1"/><circle cx="1127.6" cy="446.34" r="5.1" fill="#2f7de1"/><circle cx="1280.9" cy="382.90" r="5.1" fill="#2f7de1"/><circle cx="1434.2" cy="256.02" r="5.1" fill="#2f7de1"/><circle cx="1587.5" cy="430.48" r="5.1" fill="#2f7de1"/><circle cx="1740.8" cy="446.34" r="5.1" fill="#2f7de1"/><text class="ax" x="821" y="426.5" text-anchor="middle">2</text><text class="ax" x="974.3" y="410.6" text-anchor="middle">3</text><text class="ax" x="1127.6" y="442.3" text-anchor="middle">1</text><text class="ax" x="1280.9" y="378.9" text-anchor="middle">5</text><text class="ax" x="1434.2" y="252.0" text-anchor="middle">13</text><text class="ax" x="1587.5" y="426.5" text-anchor="middle">2</text><text class="ax" x="1740.8" y="442.3" text-anchor="middle">1</text><text class="ax" x="780" y="468.2" text-anchor="end">0</text><text class="ax" x="780" y="436.5" text-anchor="end">2</text><text class="ax" x="780" y="404.8" text-anchor="end">4</text><text class="ax" x="780" y="373.0" text-anchor="end">6</text><text class="ax" x="780" y="341.3" text-anchor="end">8</text><text class="ax" x="780" y="309.6" text-anchor="end">10</text><text class="ax" x="780" y="277.9" text-anchor="end">12</text><text class="ax" x="780" y="246.2" text-anchor="end">14</text><text class="ax" x="821" y="485" text-anchor="middle">2023年07月</text><text class="ax" x="974.3" y="485" text-anchor="middle">2023年08月</text><text class="ax" x="1127.6" y="485" text-anchor="middle">2023年09月</text><text class="ax" x="1280.9" y="485" text-anchor="middle">2023年10月</text><text class="ax" x="1434.2" y="485" text-anchor="middle">2023年11月</text><text class="ax" x="1587.5" y="485" text-anchor="middle">2024年01月</text><text class="ax" x="1740.8" y="485" text-anchor="middle">2024年05月</text>
</svg>
<div style="position:absolute;left:0;top:0;width:21px;height:21px;border-radius:50%;border:2px solid rgba(0,0,0,0.07);filter:blur(1.2px);clip-path:inset(0 50% 50% 0)"></div><div style="position:absolute;left:2163px;top:0;width:21px;height:21px;border-radius:50%;border:2px solid rgba(0,0,0,0.07);filter:blur(1.2px);clip-path:inset(0 0 50% 50%)"></div>
</body></html>
